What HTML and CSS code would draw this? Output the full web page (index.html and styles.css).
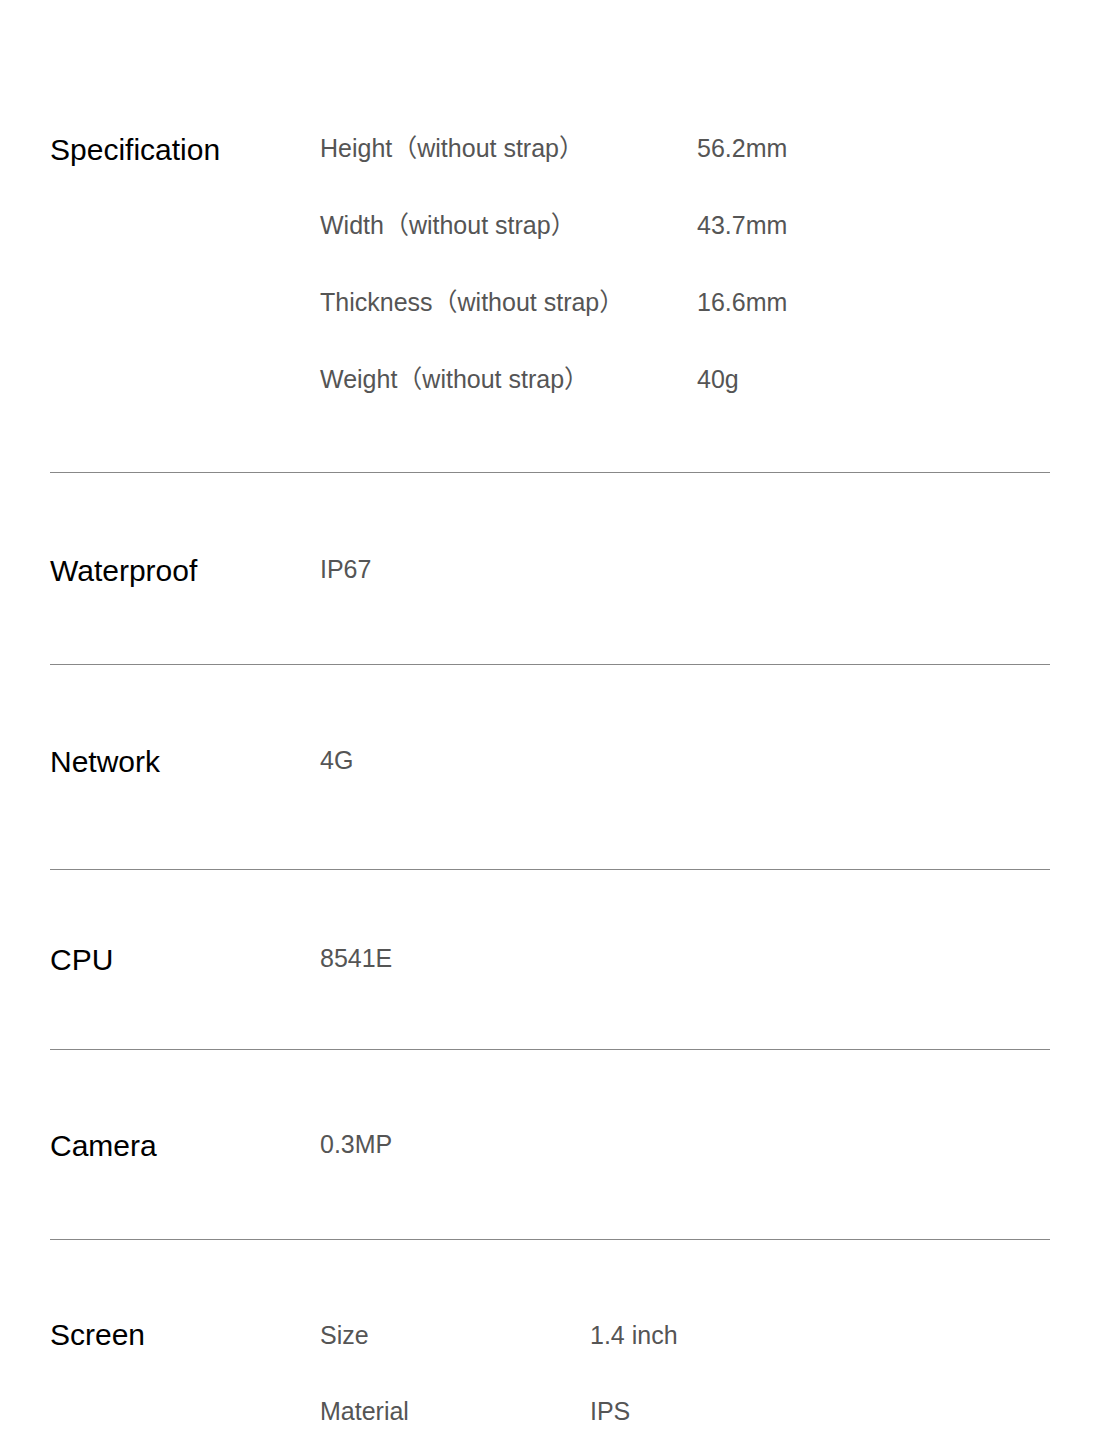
FILE: index.html
```html
<!DOCTYPE html>
<html lang="en">
<head>
  <meta charset="UTF-8">
  <meta name="viewport" content="width=device-width, initial-scale=1.0">
  <title>Specifications</title>
  <link rel="stylesheet" href="styles.css">
</head>
<body>

  <div class="spec-list">

    <!-- Specification -->
    <div class="spec-section spec-first">
      <div class="spec-label">Specification</div>
      <div class="spec-values">
        <div class="spec-row">
          <span class="spec-name">Height（without strap）</span>
          <span class="spec-value">56.2mm</span>
        </div>
        <div class="spec-row">
          <span class="spec-name">Width（without strap）</span>
          <span class="spec-value">43.7mm</span>
        </div>
        <div class="spec-row">
          <span class="spec-name">Thickness（without strap）</span>
          <span class="spec-value">16.6mm</span>
        </div>
        <div class="spec-row">
          <span class="spec-name">Weight（without strap）</span>
          <span class="spec-value">40g</span>
        </div>
      </div>
    </div>

    <div class="spec-section spec-waterproof">
      <div class="spec-label">Waterproof</div>
      <div class="spec-values">
        <div class="spec-row"><span class="spec-name">IP67</span></div>
      </div>
    </div>

    <div class="spec-section spec-network">
      <div class="spec-label">Network</div>
      <div class="spec-values">
        <div class="spec-row"><span class="spec-name">4G</span></div>
      </div>
    </div>

    <div class="spec-section spec-cpu">
      <div class="spec-label">CPU</div>
      <div class="spec-values">
        <div class="spec-row"><span class="spec-name">8541E</span></div>
      </div>
    </div>

    <div class="spec-section spec-camera">
      <div class="spec-label">Camera</div>
      <div class="spec-values">
        <div class="spec-row"><span class="spec-name">0.3MP</span></div>
      </div>
    </div>

    <!-- Screen -->
    <div class="spec-section spec-screen">
      <div class="spec-label">Screen</div>
      <div class="spec-values narrow">
        <div class="spec-row">
          <span class="spec-name">Size</span>
          <span class="spec-value">1.4 inch</span>
        </div>
        <div class="spec-row">
          <span class="spec-name">Material</span>
          <span class="spec-value">IPS</span>
        </div>
      </div>
    </div>

  </div>

</body>
</html>
```

FILE: styles.css
```css
body {
  margin: 0;
  padding: 0 50px;
  background: #fff;
  font-family: "Liberation Sans", Arial, "Noto Sans CJK SC", sans-serif;
}
.spec-list {
  width: 1000px;
}
.spec-section {
  display: flex;
  align-items: flex-start;
  border-bottom: 1px solid #888;
  padding: 78px 0 73px;
}
.spec-section:last-child {
  border-bottom: none;
}
.spec-first {
  padding: 130px 0 71px;
}
.spec-network {
  padding: 77px 0 87px;
}
.spec-cpu {
  padding: 70px 0 69px;
}
.spec-camera {
  padding: 76px 0 73px;
}
.spec-screen {
  padding: 75px 0 0;
}
.spec-label {
  width: 270px;
  flex-shrink: 0;
  font-size: 30px;
  line-height: 40px;
  color: #000;
}
.spec-values {
  display: flex;
  flex-direction: column;
  gap: 41px;
  padding-bottom: 4px;
  font-size: 25px;
  line-height: 36px;
  color: #555;
}
.narrow {
  gap: 40px;
  margin-top: 2px;
}
.spec-row {
  display: flex;
}
.spec-name {
  width: 377px;
  flex-shrink: 0;
}
.narrow .spec-name {
  width: 270px;
}
```
